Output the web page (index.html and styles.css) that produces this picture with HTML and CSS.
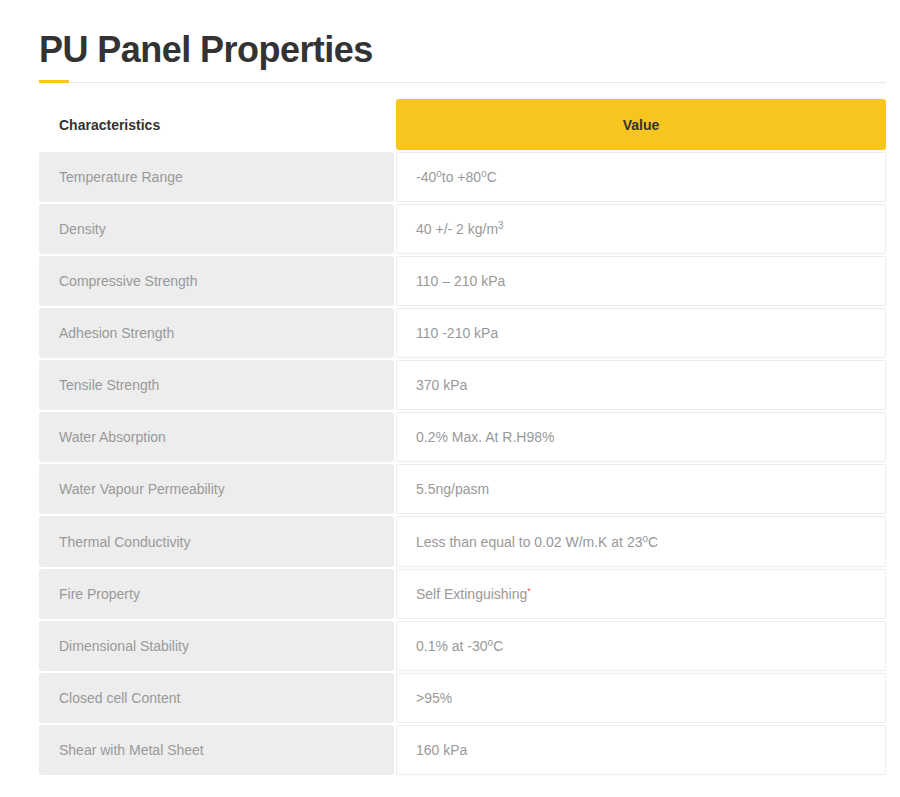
FILE: index.html
```html
<!DOCTYPE html>
<html>
<head>
<meta charset="utf-8">
<link rel="stylesheet" href="styles.css">
</head>
<body>
<div class="page">
  <div class="heading">
    <h1 class="title">PU Panel Properties</h1>
  </div>
  <table class="props">
    <thead>
      <tr>
        <th class="col-char">Characteristics</th>
        <th class="col-val">Value</th>
      </tr>
    </thead>
    <tbody>
      <tr><td class="c">Temperature Range</td><td class="v">-40<sup>o</sup>to +80<sup>o</sup>C</td></tr>
      <tr><td class="c">Density</td><td class="v">40 +/- 2 kg/m<sup>3</sup></td></tr>
      <tr><td class="c">Compressive Strength</td><td class="v">110 – 210 kPa</td></tr>
      <tr><td class="c">Adhesion Strength</td><td class="v">110 -210 kPa</td></tr>
      <tr><td class="c">Tensile Strength</td><td class="v">370 kPa</td></tr>
      <tr><td class="c">Water Absorption</td><td class="v">0.2% Max. At R.H98%</td></tr>
      <tr><td class="c">Water Vapour Permeability</td><td class="v">5.5ng/pasm</td></tr>
      <tr class="tall"><td class="c">Thermal Conductivity</td><td class="v">Less than equal to 0.02 W/m.K at 23<sup>o</sup>C</td></tr>
      <tr><td class="c">Fire Property</td><td class="v">Self Extinguishing<sup class="star">*</sup></td></tr>
      <tr><td class="c">Dimensional Stability</td><td class="v">0.1% at -30<sup>o</sup>C</td></tr>
      <tr><td class="c">Closed cell Content</td><td class="v">&gt;95%</td></tr>
      <tr><td class="c">Shear with Metal Sheet</td><td class="v">160 kPa</td></tr>
    </tbody>
  </table>
</div>
</body>
</html>
```

FILE: styles.css
```css
html, body {
  margin: 0;
  padding: 0;
  background: #ffffff;
  font-family: "Liberation Sans", Arial, sans-serif;
}

.page {
  padding: 28px 0 0 39px;
  width: 847px;
}

.heading {
  position: relative;
  padding-bottom: 11px;
  border-bottom: 1px solid #e9e9e9;
}

.heading::after {
  content: "";
  position: absolute;
  left: 0;
  bottom: -1px;
  width: 30px;
  height: 3px;
  background: #f7c51e;
}

.title {
  margin: 0;
  font-size: 36px;
  line-height: 43px;
  font-weight: 700;
  color: #333333;
  letter-spacing: -0.55px;
}

.props {
  border-collapse: separate;
  border-spacing: 2px;
  margin: 14px 0 0 -2px;
  width: 851px;
  table-layout: fixed;
  font-size: 14px;
}

.props th {
  height: 51px;
  padding: 0 20px;
  font-weight: 700;
  color: #333333;
  box-sizing: border-box;
}

.col-char {
  width: 355px;
  text-align: left;
  background: #ffffff;
}

.col-val {
  width: 490px;
  text-align: center;
  background: #f7c51e;
  border-radius: 3px;
}

.props td {
  height: 50px;
  box-sizing: border-box;
  padding: 0 20px;
  color: #999999;
  vertical-align: middle;
  line-height: 18px;
}

.props .tall td {
  height: 51px;
}

.c {
  background: #ededed;
  border-radius: 3px;
}

.v {
  background: #ffffff;
  border: 1px solid #ececec;
  border-radius: 2px;
  padding-left: 19px !important;
}

sup {
  font-size: 10px;
  line-height: 0;
  vertical-align: 5px;
}

.star {
  color: #e8542f;
  font-size: 9px;
}
```
